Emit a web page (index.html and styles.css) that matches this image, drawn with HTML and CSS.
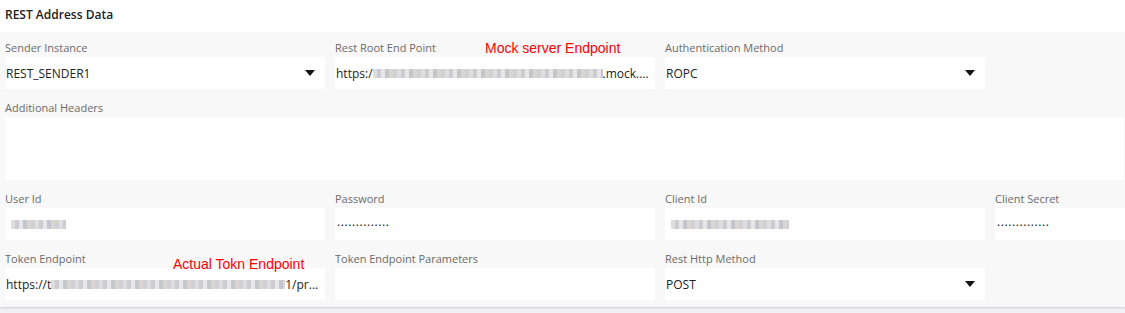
FILE: index.html
```html
<!DOCTYPE html>
<html lang="en">
<head>
    <meta charset="UTF-8">
    <meta name="viewport" content="width=device-width, initial-scale=1.0">
    <title>REST Address Data</title>
    <link rel="stylesheet" href="styles.css">
</head>
<body>
    <div class="page">
        <h2 class="section-title">REST Address Data</h2>
        <div class="panel">
            <div class="row">
                <div class="field">
                    <label>Sender Instance</label>
                    <div class="box select"><span>REST_SENDER1</span><i class="caret"></i></div>
                </div>
                <div class="field">
                    <label>Rest Root End Point</label>
                    <div class="box"><span>https:/</span><span class="blur blur-a"></span><span>.mock....</span></div>
                    <span class="note note-mock">Mock server Endpoint</span>
                </div>
                <div class="field">
                    <label>Authentication Method</label>
                    <div class="box select"><span>ROPC</span><i class="caret"></i></div>
                </div>
            </div>

            <div class="row">
                <div class="field wide">
                    <label>Additional Headers</label>
                    <div class="box area"></div>
                </div>
            </div>

            <div class="row">
                <div class="field">
                    <label>User Id</label>
                    <div class="box"><span class="blur blur-b"></span></div>
                </div>
                <div class="field">
                    <label>Password</label>
                    <div class="box"><span class="dots">..............</span></div>
                </div>
                <div class="field">
                    <label>Client Id</label>
                    <div class="box"><span class="blur blur-c"></span></div>
                </div>
                <div class="field edge">
                    <label>Client Secret</label>
                    <div class="box"><span class="dots">..............</span></div>
                </div>
            </div>

            <div class="row">
                <div class="field">
                    <label>Token Endpoint</label>
                    <div class="box"><span>https://t</span><span class="blur blur-d"></span><span>1/pr...</span></div>
                    <span class="note note-token">Actual Tokn Endpoint</span>
                </div>
                <div class="field">
                    <label>Token Endpoint Parameters</label>
                    <div class="box"></div>
                </div>
                <div class="field">
                    <label>Rest Http Method</label>
                    <div class="box select"><span>POST</span><i class="caret"></i></div>
                </div>
            </div>
        </div>
    </div>
</body>
</html>
```

FILE: styles.css
```css
* {
    box-sizing: border-box;
    margin: 0;
    padding: 0;
}

html, body {
    width: 1125px;
    height: 313px;
    overflow: hidden;
}

body {
    font-family: "Open Sans", Arial, sans-serif;
    background-color: #f1f0f3;
    color: #222;
}

.page {
    background-color: #fff;
}

.section-title {
    height: 32px;
    padding: 6px 0 0 5px;
    font-size: 12px;
    font-weight: 600;
    color: #222;
    background-color: #fff;
}

.panel {
    background-color: #f8f8f8;
    padding: 5px 0 0 5px;
    box-shadow: 0 1px 2px rgba(0, 0, 0, 0.15);
}

.row {
    display: flex;
    gap: 10px;
}

.field {
    position: relative;
    flex: 0 0 320px;
    width: 320px;
    min-width: 0;
    margin-bottom: 8px;
}

.row:last-child .field {
    margin-bottom: 7px;
}

.field.wide {
    flex: 0 0 1119px;
    width: 1119px;
}

.field.edge {
    flex: 0 0 130px;
    width: 130px;
}

label {
    display: block;
    height: 20px;
    padding-top: 3px;
    font-size: 11px;
    line-height: 15px;
    color: #6b6b6b;
}

.box {
    display: flex;
    align-items: center;
    height: 32px;
    padding: 0 6px 0 1px;
    background-color: #fff;
    font-size: 12px;
    color: #222;
    white-space: nowrap;
    overflow: hidden;
}

.box.area {
    height: 63px;
}

.select {
    justify-content: space-between;
}

.caret {
    width: 0;
    height: 0;
    margin-right: 4px;
    border-left: 5px solid transparent;
    border-right: 5px solid transparent;
    border-top: 6px solid #111;
}

.blur {
    display: inline-block;
    flex: none;
    height: 9px;
    background: repeating-linear-gradient(90deg,
        #d8d8dc 0 4px, #c4c2c6 4px 8px, #e2e2e4 8px 12px,
        #b9bcc4 12px 16px, #d4ceca 16px 20px, #c8c9ce 20px 24px);
    opacity: 0.85;
}

.blur-a {
    width: 230px;
}

.blur-b {
    width: 55px;
    margin-left: 5px;
}

.blur-c {
    width: 118px;
    margin-left: 5px;
}

.blur-d {
    width: 234px;
}

.dots {
    font-size: 12px;
    letter-spacing: 0.6px;
    line-height: 1;
    padding-bottom: 5px;
    padding-left: 1px;
    color: #111;
}

.note {
    position: absolute;
    font-family: Arial, "Liberation Sans", sans-serif;
    font-size: 14px;
    color: #ff0000;
    white-space: nowrap;
}

.note-mock {
    left: 150px;
    top: 3px;
}

.note-token {
    left: 168px;
    top: 8px;
}
```
